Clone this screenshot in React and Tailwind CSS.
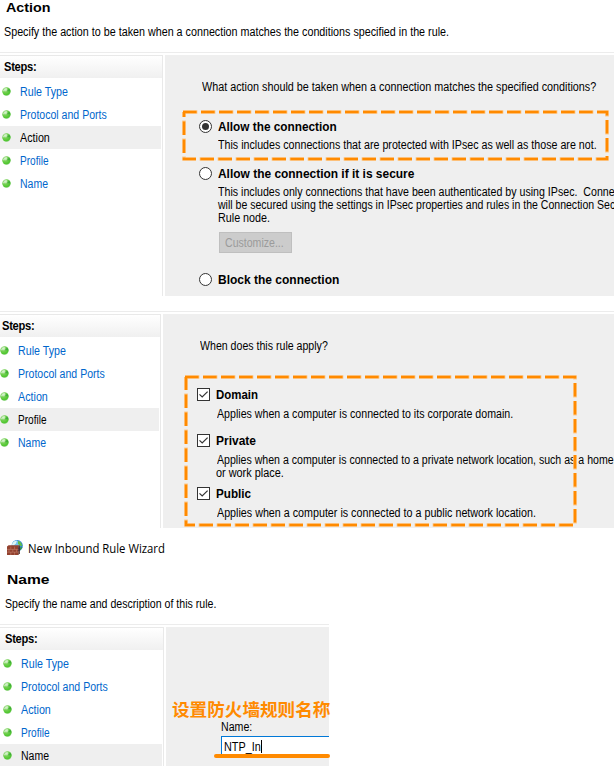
import React, { useLayoutEffect, useRef, useState } from 'react';

// A single line of text condensed or widened to a given width.
function Line({ w, className = '', children }) {
  const ref = useRef(null);
  const [scale, setScale] = useState(1);
  useLayoutEffect(() => {
    const natural = ref.current.offsetWidth;
    if (natural) setScale(w / natural);
  }, [w]);
  return (
    <div className={`h-[13px] leading-[15px] ${className}`}>
      <span ref={ref} className="inline-block origin-left whitespace-pre align-top" style={{ transform: `scaleX(${scale})` }}>
        {children}
      </span>
    </div>
  );
}

function Bullet() {
  return (
    <svg width="9" height="9" viewBox="0 0 9 9" className="shrink-0">
      <defs>
        <radialGradient id="ball" cx="0.36" cy="0.28" r="0.78">
          <stop offset="0" stopColor="#d3f0c8" />
          <stop offset="0.4" stopColor="#74d052" />
          <stop offset="0.8" stopColor="#4fc62f" />
          <stop offset="1" stopColor="#85cc78" />
        </radialGradient>
      </defs>
      <circle cx="4.5" cy="4.5" r="4.2" fill="url(#ball)" />
      <path d="M4.8 4.2L7 1.4A4 4 0 0 1 8.3 4.2Z" fill="#2f9c37" opacity="0.65" />
      <path d="M1 3.4Q3 .9 5.2 1.1L4.6 3.7Q2.6 3.2 1 4.8Z" fill="#d9f3d4" opacity="0.65" />
    </svg>
  );
}

const steps = [
  ['Rule Type', 48],
  ['Protocol and Ports', 87],
  ['Action', 29.5],
  ['Profile', 28.5],
  ['Name', 28],
];

function Steps({ active, width, head, bullet, textGap }) {
  return (
    <div className={`shrink-0 border-t border-r border-[#e9e9e9] bg-white ${width}`}>
      <div className={`h-[22px] bg-gradient-to-b from-white to-[#f0f0f0] pt-1 font-bold tracking-[-0.3px] ${head}`}>
        <Line w={32.5}>Steps:</Line>
      </div>
      <div className="mr-px pt-0.5">
        {steps.map(([name, w]) => (
          <div key={name} className={`flex h-[23px] items-center ${bullet} ${textGap} ${name === active ? 'bg-[#efefef] text-black' : 'text-[#0066cc]'}`}>
            <Bullet />
            <Line w={w}>{name}</Line>
          </div>
        ))}
      </div>
    </div>
  );
}

function Radio({ checked }) {
  return (
    <span className="flex size-[13px] items-center justify-center rounded-full border border-[#333] bg-white">
      {checked && <span className="size-[7px] rounded-full bg-[#333]" />}
    </span>
  );
}

function Option({ label, w, checked, className = '' }) {
  return (
    <div className={`-ml-[3px] flex items-center gap-1.5 font-bold ${className}`}>
      <Radio checked={checked} />
      <Line w={w}>{label}</Line>
    </div>
  );
}

function Check({ label, w, className = '' }) {
  return (
    <div className={`-ml-[3px] flex items-center gap-1.5 font-bold ${className}`}>
      <svg width="13" height="13" viewBox="0 0 13 13">
        <rect x="0.5" y="0.5" width="12" height="12" fill="#fff" stroke="#333" />
        <path d="M2.5 6.3L5.2 9L10.6 3.6" fill="none" stroke="#333" strokeWidth="1.2" />
      </svg>
      <Line w={w}>{label}</Line>
    </div>
  );
}

function Dashes({ w, h, className }) {
  const d = `M1 2H${w - 2}V${h - 2}H2V2`;
  return (
    <svg width={w} height={h} className={`absolute ${className}`}>
      <path d={d} fill="none" stroke="#ffc98a" strokeWidth="3.6" strokeDasharray="14.4 3.6" />
      <path d={d} fill="none" stroke="#ff8a00" strokeWidth="2.6" strokeDasharray="13.6 4.4" />
    </svg>
  );
}

function FirewallIcon() {
  return (
    <svg width="16" height="16" viewBox="0 0 16 16">
      <circle cx="10.2" cy="5.7" r="5.6" fill="#2c7fd0" />
      <circle cx="9.4" cy="4.5" r="4.1" fill="#74c4f0" />
      <path d="M5.6 2.8Q8 .5 10 .8L9 3.3L6.8 5.5H4.8Z" fill="#ddf5f5" />
      <path d="M11 .7L14 2.6L15.4 6L12.5 5.8L11 3.5Z" fill="#5fc04c" />
      <path d="M13 7.4L15.6 7L13.2 10.6Z" fill="#37973d" />
      <path d="M0 6.6L1.6 5.2H12.8L11.4 6.6V15H0Z" fill="#93422f" />
      <path d="M11.4 6.6L12.8 5.2V13.2L11.4 15Z" fill="#4b1d17" />
      <path d="M0 9.4H11.4M0 12.2H11.4M3.8 6.6V9.4M7.6 6.6V9.4M2 9.4V12M5.8 9.4V12M9.6 9.4V12M3.8 12V15M7.6 12V15" stroke="#c98a76" strokeWidth="0.5" />
    </svg>
  );
}

export default function App() {
  return (
    <div className="h-[766px] w-[614px] overflow-hidden bg-white font-['Liberation_Sans',Arial,sans-serif] text-[12px] text-black">
      <section className="h-[311px]">
        <header className="h-[53px] border-b border-[#ececec] pl-1">
          <Line w={44} className="ml-0.5 text-[13px] font-bold">Action</Line>
          <Line w={445} className="mt-3">Specify the action to be taken when a connection matches the conditions specified in the rule.</Line>
        </header>
        <div className="mt-0.5 flex h-[241px]">
          <Steps active="Action" width="w-[163px]" head="pl-1" bullet="pl-0.5" textGap="gap-[9px]" />
          <main className="relative ml-0.5 flex-1 overflow-hidden bg-[#efefef] pt-[25px] pl-[37px]">
            <Line w={394}>What action should be taken when a connection matches the specified conditions?</Line>
            <Option className="mt-[27px]" label="Allow the connection" w={119} checked />
            <div className="pt-[5px] pl-4">
              <Line w={379}>This includes connections that are protected with IPsec as well as those are not.</Line>
            </div>
            <Option className="mt-4" label="Allow the connection if it is secure" w={196} />
            <div className="pt-[5px] pl-4">
              <Line w={397}>This includes only connections that have been authenticated by using IPsec.  Conne</Line>
              <Line w={397}>will be secured using the settings in IPsec properties and rules in the Connection Sec</Line>
              <Line w={52}>Rule node.</Line>
              <button className="mt-2 ml-px flex h-[21px] w-[73px] items-center border border-[#bfbfbf] bg-[#cccccc] pl-[5px] text-[#9b9b9b]">
                <Line w={59}>Customize...</Line>
              </button>
            </div>
            <Option className="mt-5" label="Block the connection" w={121} />
            <Dashes w={427} h={51} className="top-[55px] left-[17px]" />
          </main>
        </div>
      </section>

      <section className="h-[217px] border-t border-[#ececec] pt-0.5">
        <div className="flex h-[214px]">
          <Steps active="Profile" width="w-[161px]" head="pl-0.5" bullet="pl-0" textGap="gap-[9px]" />
          <main className="relative ml-0.5 flex-1 overflow-hidden bg-[#efefef] pt-[25px] pl-[37px]">
            <Line w={128}>When does this rule apply?</Line>
            <Check className="mt-9" label="Domain" w={42} />
            <Line w={296} className="mt-1.5 ml-[17px]">Applies when a computer is connected to its corporate domain.</Line>
            <Check className="mt-3.5" label="Private" w={40} />
            <Line w={397} className="mt-1.5 ml-[17px]">Applies when a computer is connected to a private network location, such as a home</Line>
            <Line w={68} className="ml-4">or work place.</Line>
            <Check className="mt-2" label="Public" w={35} />
            <Line w={319} className="mt-1.5 ml-[17px]">Applies when a computer is connected to a public network location.</Line>
            <Dashes w={393} h={152} className="top-[61px] left-[21px]" />
          </main>
        </div>
      </section>

      <section className="w-[329px]">
        <header className="h-[97px] border-b border-[#ececec] pt-3">
          <div className="flex h-4 items-center gap-[5px] pl-[7px]">
            <FirewallIcon />
            <Line w={137} className="-mt-0.5 font-['Open_Sans',sans-serif]">New Inbound Rule Wizard</Line>
          </div>
          <Line w={42} className="mt-4 ml-[7px] text-[13px] font-bold">Name</Line>
          <Line w={211} className="mt-3 ml-[5px]">Specify the name and description of this rule.</Line>
        </header>
        <div className="mt-0.5 flex h-[139px]">
          <Steps active="Name" width="w-[164px]" head="pl-[5px]" bullet="pl-[3px]" textGap="gap-[9px]" />
          <main className="relative ml-0.5 flex-1 bg-[#efefef] pt-[93px] pl-[55px]">
            <Line w={31}>Name:</Line>
            <div className="mt-[3px] flex h-[19px] items-center border-t border-l border-[#0078d7] bg-white pl-0.5">
              <Line w={37}>NTP_In</Line>
            </div>
            <span className="absolute top-[113px] left-[95px] h-[13px] w-px bg-black" />
            <div className="absolute top-[127px] left-12 h-1 w-[116px] rounded-full bg-[#ff8a00]" />
            <div className="absolute top-[73px] left-[6px] text-[17.6px] leading-[18px] font-bold whitespace-nowrap text-[#ff8a00] font-['Noto_Sans_CJK_SC',sans-serif]">设置防火墙规则名称</div>
          </main>
        </div>
      </section>
    </div>
  );
}
